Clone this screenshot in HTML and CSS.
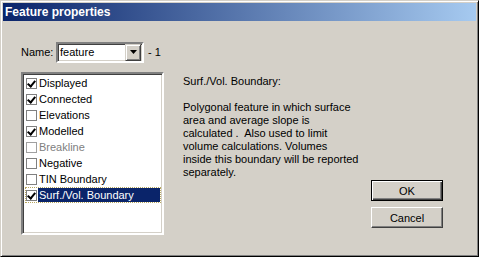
FILE: index.html
```html
<!DOCTYPE html>
<html lang="en">
<head>
  <meta charset="UTF-8" />
  <title>Feature properties</title>
  <link rel="stylesheet" href="styles.css">
</head>
<body>

<div class="window">
  <div class="titlebar">Feature properties</div>

  <div class="content">
    <div class="left-col">
      <div class="name-row">
        <span class="name-label">Name:</span>
        <div class="combo">
          <span class="combo-text">feature</span>
          <span class="combo-btn">
            <svg width="7" height="4" viewBox="0 0 7 4"><path d="M0 0h7L3.5 4z" fill="#000"/></svg>
          </span>
        </div>
        <span class="name-count">- 1</span>
      </div>

      <div class="listbox">
        <div class="row"><span class="check on"></span><span class="label">Displayed</span></div>
        <div class="row"><span class="check on"></span><span class="label">Connected</span></div>
        <div class="row"><span class="check"></span><span class="label">Elevations</span></div>
        <div class="row"><span class="check on"></span><span class="label">Modelled</span></div>
        <div class="row disabled"><span class="check"></span><span class="label">Breakline</span></div>
        <div class="row"><span class="check"></span><span class="label">Negative</span></div>
        <div class="row"><span class="check"></span><span class="label">TIN Boundary</span></div>
        <div class="row selected"><span class="check on"></span><span class="label">Surf./Vol. Boundary</span></div>
      </div>
    </div>

    <div class="description">
      <p class="desc-title">Surf./Vol. Boundary:</p>
      <p class="desc-text">Polygonal feature in which surface<br>area and average slope is<br>calculated .&nbsp; Also used to limit<br>volume calculations. Volumes<br>inside this boundary will be reported<br>separately.</p>
    </div>

    <div class="buttons">
      <button type="button" class="default">OK</button>
      <button type="button">Cancel</button>
    </div>
  </div>
</div>

</body>
</html>
```

FILE: styles.css
```css
:root {
  --face: #d4d0c8;
  --shadow: #808080;
  --dark: #404040;
  --select: #0a246a;
}

* {
  box-sizing: border-box;
}

body {
  margin: 0;
  font-family: 'Liberation Sans', Arial, sans-serif;
  font-size: 11px;
  background: var(--face);
}

.window {
  width: 479px;
  height: 257px;
  background: var(--face);
  border: 1px solid;
  border-color: var(--face) #000 #000 var(--face);
  box-shadow: inset 1px 1px 0 #fff, inset -1px -1px 0 var(--shadow);
  padding: 2px;
  display: flex;
  flex-direction: column;
}

.titlebar {
  height: 18px;
  background: linear-gradient(to right, #0a246a, #a6caf0);
  color: white;
  font-weight: bold;
  font-size: 12px;
  line-height: 18px;
  padding-left: 2px;
}

.content {
  flex: 1;
  display: flex;
  padding-left: 18px;
}

.left-col {
  width: 143px;
  padding-top: 21px;
}

.name-row {
  display: flex;
  align-items: center;
  height: 20px;
  white-space: nowrap;
}

.name-label {
  width: 35px;
}

.combo {
  width: 88px;
  height: 21px;
  background: white;
  border: 2px solid;
  border-color: var(--shadow) #fff #fff var(--shadow);
  box-shadow: inset 1px 1px 0 var(--dark), inset -1px -1px 0 var(--face);
  display: flex;
  align-items: center;
  padding: 1px;
}

.combo-text {
  flex: 1;
  padding-left: 1px;
}

.combo-btn {
  width: 16px;
  height: 17px;
  background: var(--face);
  border: 1px solid;
  border-color: var(--face) var(--dark) var(--dark) var(--face);
  box-shadow: inset 1px 1px 0 #fff, inset -1px -1px 0 var(--shadow);
  display: flex;
  align-items: center;
  justify-content: center;
}

.name-count {
  margin-left: 4px;
}

.listbox {
  margin-top: 10px;
  width: 143px;
  height: 163px;
  background: white;
  border: 2px solid;
  border-color: var(--shadow) #fff #fff var(--shadow);
  box-shadow: inset 1px 1px 0 var(--dark), inset -1px -1px 0 var(--face);
  padding: 1px 1px 1px 2px;
}

.row {
  display: flex;
  align-items: center;
  height: 16px;
  white-space: nowrap;
  border: 1px solid transparent;
}

.check {
  width: 11px;
  height: 11px;
  border: 1px solid var(--shadow);
  background: white;
  margin-right: 1px;
  position: relative;
}

.check.on::after {
  content: "";
  position: absolute;
  left: 2px;
  top: 0px;
  width: 3px;
  height: 6px;
  border: solid #000;
  border-width: 0 2px 2px 0;
  transform: rotate(40deg);
}

.label {
  flex: 1;
  height: 14px;
  line-height: 14px;
  padding-left: 1px;
}

.row.disabled .label {
  color: var(--shadow);
}

.row.disabled .check {
  border-color: #a0a0a0;
}

.row.selected {
  border: 1px dotted #b8a860;
}

.row.selected .label {
  background: var(--select);
  color: white;
}

.description {
  margin-left: 19px;
  padding-top: 54px;
  white-space: nowrap;
  line-height: 13px;
}

.description p {
  margin: 0;
}

.desc-text {
  margin-top: 13px !important;
}

.buttons {
  margin-left: auto;
  margin-right: 33px;
  padding-top: 159px;
  display: flex;
  flex-direction: column;
  gap: 6px;
}

.buttons button {
  width: 72px;
  height: 21px;
  font-family: inherit;
  font-size: 11px;
  background: var(--face);
  border: 1px solid;
  border-color: #fff var(--dark) var(--dark) #fff;
  box-shadow: inset -1px -1px 0 var(--shadow);
  padding: 0;
}

.buttons button.default {
  border: 1px solid #000;
  box-shadow: inset 1px 1px 0 #fff, inset -1px -1px 0 var(--dark), inset -2px -2px 0 var(--shadow);
}
```
